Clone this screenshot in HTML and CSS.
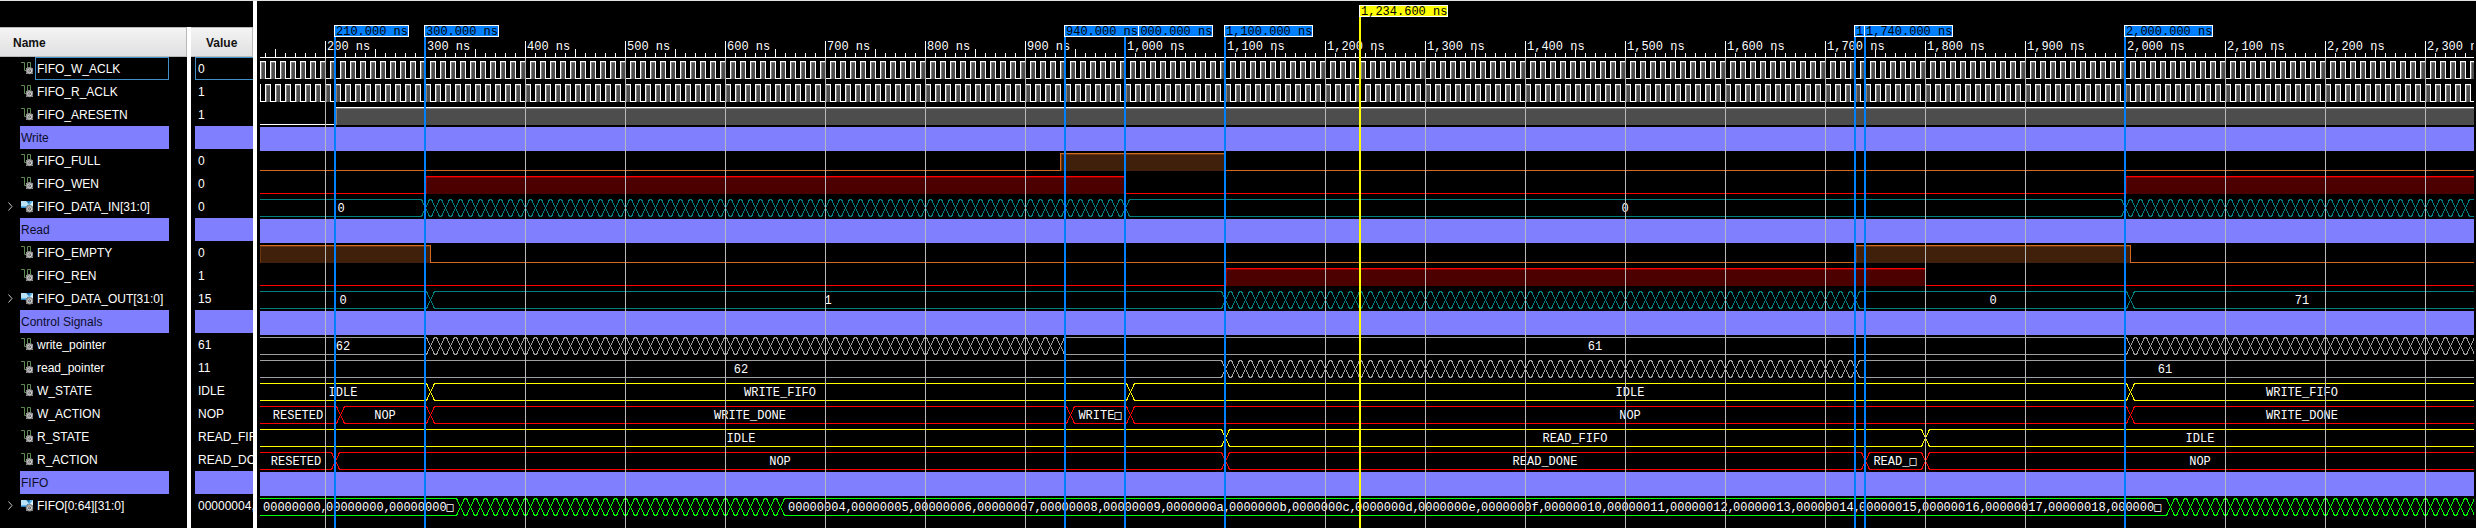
FILE: index.html
```html
<!DOCTYPE html>
<html lang="en">
<head>
<meta charset="utf-8">
<title>Waveform viewer</title>
<link rel="stylesheet" href="styles.css">
</head>
<body>
<svg class="symbols" aria-hidden="true">
  <symbol id="icon-scalar" viewBox="0 0 13 13">
    <path d="M0 0.5H3.5V8.5H6.5V0.5H9.5V5" fill="none" stroke="#5c8a50"/>
    <circle cx="8.5" cy="8.7" r="3.6" fill="#8c8c8c"/>
    <path d="M5.2 6.2l1.5 1.5M11.8 12l-1.2-1.2M5.2 12l1.5-1.5M12 6.4l-1.4 1.3" stroke="#b4b4b4"/>
    <circle cx="8.7" cy="8.9" r="1.9" fill="#4c4c4c" stroke="#dcdcdc"/>
    <circle cx="8.7" cy="8.9" r="0.7" fill="#e4e4e4"/>
  </symbol>
  <symbol id="icon-bus" viewBox="0 0 13 13">
    <path d="M0 1H12V6L9 8H0Z" fill="#5fb4e6"/>
    <path d="M0 1H6L8 4L6 6H0Z" fill="#b9e2f7"/>
    <path d="M5 1H9L8 4Z" fill="#1f6fae"/>
    <path d="M0 7.5H5L7 5" fill="none" stroke="#2f86c4"/>
    <path d="M9 5L12 1V7Z" fill="#dff2fb"/>
    <circle cx="8.5" cy="8.7" r="3.7" fill="#8c8c8c"/>
    <path d="M5.2 12l1.5-1.5M11.8 12l-1.2-1.2" stroke="#a4a4a4"/>
    <circle cx="8.7" cy="8.9" r="2" fill="#4c4c4c" stroke="#dcdcdc"/>
    <circle cx="8.7" cy="8.9" r="0.7" fill="#e4e4e4"/>
  </symbol>
</svg>
<main class="viewer">
  <section class="signals">
    <table class="signal-table">
      <colgroup><col class="col-name"><col class="col-value"></colgroup>
      <thead>
        <tr><th class="head-name" scope="col"><div class="head">Name</div></th><th class="head-value" scope="col"><div class="head">Value</div></th></tr>
      </thead>
      <tbody id="signal-rows"></tbody>
    </table>
  </section>
  <section class="waves">
    <svg id="wave" class="wave" role="img" aria-label="Signal waveforms"></svg>
  </section>
</main>
<script src="viewer.js"></script>
</body>
</html>
```
FILE: styles.css
```css
* {
  box-sizing: border-box;
}

body {
  margin: 0;
  min-height: 100vh;
  display: flex;
  flex-direction: column;
  overflow: hidden;
  background: #000;
  border-top: 1px solid #e2e2e2;
  color: #fff;
  font: 12px/23px "Liberation Sans", Arial, sans-serif;
}

.symbols {
  position: absolute;
  width: 0;
  height: 0;
}

.viewer {
  flex: 1;
  display: flex;
}

.signals {
  flex: none;
  width: 257px;
  padding-top: 26px;
  border-right: 4px solid #fff;
  background: linear-gradient(#fff, #fff) 187px 26px / 4px 100% no-repeat;
  overflow: hidden;
}

.signal-table {
  width: 100%;
  table-layout: fixed;
  border-collapse: collapse;
}

.col-name {
  width: 191px;
}

th,
td {
  padding: 0;
  text-align: left;
}

.head-name {
  padding-right: 4px;
}

.head {
  height: 30px;
  padding-left: 13px;
  border: solid #b8b8b8;
  border-width: 1px 1px 1px 0;
  background: linear-gradient(#f4f4f4, #e0e0e2);
  color: #111;
  line-height: 31px;
}

.head-value .head {
  padding-left: 15px;
}

.name {
  display: flex;
  align-items: center;
  height: 23px;
  padding: 0 22px 0 8px;
}

.toggle {
  flex: none;
  display: flex;
  align-items: center;
  width: 13px;
  height: 23px;
  padding: 0;
  border: 0;
  background: none;
}

.toggle path {
  fill: none;
  stroke: #c8c8c8;
}

.spacer {
  flex: none;
  width: 13px;
}

.icon {
  flex: none;
  width: 13px;
  height: 13px;
  margin-right: 1px;
}

.label {
  flex: 1;
  height: 23px;
  padding-left: 1px;
  border: 1px solid transparent;
  line-height: 23px;
  white-space: nowrap;
}

.value {
  height: 23px;
  margin-left: 4px;
  padding-left: 2px;
  border: 1px solid transparent;
  border-right: 0;
  line-height: 23px;
  white-space: nowrap;
  overflow: hidden;
}

.selected .label,
.selected .value {
  border-color: #3f8fc8;
}

.group .name {
  padding-left: 20px;
}

.group .label,
.group .value {
  padding-left: 0;
  background: #8080ff;
  border-color: #8080ff;
  color: #0c0c28;
}

.waves {
  flex: 1;
  min-width: 0;
  display: flex;
  padding: 0 2px 0 3px;
}

.wave {
  flex: 1;
  min-width: 0;
  width: 100%;
  overflow: hidden;
  shape-rendering: crispEdges;
  font: 12px "Liberation Mono", "Courier New", monospace;
}

.wave path {
  fill: none;
}

.wave text {
  fill: #fff;
  white-space: pre;
}

.wave .centered {
  text-anchor: middle;
}

.wave .cut {
  font-family: "DejaVu Sans Mono", monospace;
}

.wave .band {
  fill: #8080ff;
}

.wave .grid {
  fill: #b8b8b8;
}

.wave .tick {
  fill: #fff;
}

.wave .marker {
  fill: #0080ff;
}

.wave .cursor {
  fill: #ff0;
}

.wave .flag {
  stroke: #fff;
}

.wave .flag-text {
  fill: #000;
}

.clock { stroke: #fff; }
.orange { stroke: #d2691e; }
.red { stroke: #f00; }
.teal { stroke: #008080; }
.gray { stroke: #a0a0a0; }
.yellow { stroke: #ff0; }
.green { stroke: #0f0; }

.wave .clock-fill { fill: #4d4d4d; }
.wave .clock-edge { fill: #808080; }
.wave .orange-fill { fill: #40200a; }
.wave .orange-edge { fill: #6b3610; }
.wave .red-fill { fill: #4d0000; }
.wave .red-edge { fill: #900000; }
```
FILE: viewer.js
```js
const START = 135;
const LABEL_START = 131;
const ROW = 23;

const every10 = (from, to) => {
  const out = [];
  for (let t = from; t <= to; t += 10) out.push(t);
  return out;
};

const hexWords = (from, to) => {
  const out = [];
  for (let n = from; n <= to; n++) out.push(n.toString(16).padStart(8, "0") + ",");
  return out;
};

const signals = [
  { name: "FIFO_W_ACLK", value: "0", selected: true, color: "clock", firstRise: 135 },
  { name: "FIFO_R_ACLK", value: "1", color: "clock", firstRise: 130 },
  { name: "FIFO_ARESETN", value: "1", color: "clock", high: [[210, Infinity]] },
  { group: "Write" },
  { name: "FIFO_FULL", value: "0", color: "orange", high: [[935, 1100]] },
  { name: "FIFO_WEN", value: "0", color: "red", high: [[300, 1000], [2000, Infinity]] },
  { name: "FIFO_DATA_IN[31:0]", value: "0", bus: true, color: "teal",
    changes: [...every10(300, 1000), ...every10(2000, 2340)],
    labels: [[LABEL_START, 300, "0"], [1000, 2000, "0"]] },
  { group: "Read" },
  { name: "FIFO_EMPTY", value: "0", color: "orange", high: [[-Infinity, 305], [1730, 2005]] },
  { name: "FIFO_REN", value: "1", color: "red", high: [[1100, 1800]] },
  { name: "FIFO_DATA_OUT[31:0]", value: "15", bus: true, color: "teal",
    changes: [305, ...every10(1100, 1730), 2005],
    labels: [[LABEL_START, 305, "0"], [305, 1100, "1"], [1730, 2005, "0"], [2005, Infinity, "71"]] },
  { group: "Control Signals" },
  { name: "write_pointer", value: "61", color: "gray",
    changes: [...every10(305, 935), ...every10(2005, 2345)],
    labels: [[LABEL_START, 305, "62"], [935, 2005, "61"]] },
  { name: "read_pointer", value: "11", color: "gray",
    changes: every10(1100, 1730),
    labels: [[LABEL_START, 1100, "62"], [1730, Infinity, "61"]] },
  { name: "W_STATE", value: "IDLE", color: "yellow",
    changes: [305, 1005, 2005],
    labels: [[LABEL_START, 305, "IDLE"], [305, 1005, "WRITE_FIFO"], [1005, 2005, "IDLE"], [2005, Infinity, "WRITE_FIFO"]] },
  { name: "W_ACTION", value: "NOP", color: "red",
    changes: [215, 305, 945, 1005, 2005],
    labels: [[LABEL_START, 215, "RESETED"], [215, 305, "NOP"], [305, 945, "WRITE_DONE"], [945, 1005, "WRITE□"], [1005, 2005, "NOP"], [2005, Infinity, "WRITE_DONE"]] },
  { name: "R_STATE", value: "READ_FIFO", color: "yellow",
    changes: [1100, 1800],
    labels: [[LABEL_START, 1100, "IDLE"], [1100, 1800, "READ_FIFO"], [1800, Infinity, "IDLE"]] },
  { name: "R_ACTION", value: "READ_DONE", color: "red",
    changes: [210, 1100, 1740, 1800],
    labels: [[LABEL_START, 210, "RESETED"], [210, 1100, "NOP"], [1100, 1740, "READ_DONE"], [1740, 1800, "READ_□"], [1800, Infinity, "NOP"]] },
  { group: "FIFO" },
  { name: "FIFO[0:64][31:0]", value: "00000004,00000005", bus: true, color: "green",
    changes: [...every10(335, 655), ...every10(2045, 2345)],
    words: [[138, ["00000000,", "00000000,", "00000000□"]], [663, [...hexWords(4, 24), "000000□"]]] },
];

const markers = [
  [210, "210.000 ns"], [300, "300.000 ns"], [1000, "1,000.000 ns"], [940, "940.000 ns"],
  [1100, "1,100.000 ns"], [1730, "1,730.000 ns"], [1740, "1,740.000 ns"], [2000, "2,000.000 ns"],
];

function buildTable() {
  document.getElementById("signal-rows").innerHTML = signals.map((s) => {
    if (s.group) {
      return `<tr class="group"><td><div class="name"><span class="label">${s.group}</span></div></td><td><div class="value"></div></td></tr>`;
    }
    const lead = s.bus
      ? `<button class="toggle" type="button" aria-label="Expand ${s.name}"><svg width="5" height="9" viewBox="0 0 5 9"><path d="M.5 .5L4 4.5L.5 8.5"/></svg></button>`
      : `<span class="spacer"></span>`;
    const icon = s.bus ? "icon-bus" : "icon-scalar";
    return `<tr class="${s.selected ? "selected" : "signal"}"><td><div class="name">${lead}<svg class="icon" aria-hidden="true"><use href="#${icon}"/></svg><span class="label">${s.name}</span></div></td><td><div class="value">${s.value}</div></td></tr>`;
  }).join("");
}

const rect = (cls, x, y, w, h) => `<rect class="${cls}" x="${x}" y="${y}" width="${w}" height="${h}"/>`;
const text = (cls, x, y, str) =>
  `<text class="${cls}" x="${x}" y="${y}">${str.replace("□", '<tspan class="cut">□</tspan>')}</text>`;

function drawLevels(color, high, top, end) {
  const bottom = top + 17;
  let fills = "";
  let d = "";
  let pen = START;
  for (const [from, to] of high) {
    const a = Math.max(from, START - 1);
    const b = Math.min(to, end);
    const w = Math.max(b - a - 1, 0);
    fills += rect(`${color}-fill`, a + 1, top + 1, w, 17);
    fills += rect(`${color}-edge`, a + 1, top + 1, w, 1);
    fills += rect(`${color}-edge`, a + 1, top + 1, Math.min(w, 1), 17);
    if (from >= START) d += `M${pen} ${bottom + 0.5}H${a + 0.5}V${top + 0.5}`;
    else d += `M${START} ${top + 0.5}`;
    d += `H${b + 0.5}`;
    if (to < end) d += `V${bottom + 0.5}`;
    pen = b;
  }
  if (pen < end) d += `M${pen} ${bottom + 0.5}H${end}`;
  return `${fills}<path class="${color}" d="${d}"/>`;
}

function drawBus(color, changes, top, end) {
  const hi = top + 0.5;
  const lo = top + 17.5;
  let up = `M${START} ${hi}`;
  let down = `M${START} ${lo}`;
  let flipped = false;
  for (const t of changes) {
    const x = t + 0.5;
    const [a, b] = flipped ? [lo, hi] : [hi, lo];
    up += `L${x - 4} ${a}L${x + 4} ${b}`;
    down += `L${x - 4} ${b}L${x + 4} ${a}`;
    flipped = !flipped;
  }
  up += `L${end} ${flipped ? lo : hi}`;
  down += `L${end} ${flipped ? hi : lo}`;
  return `<path class="${color}" d="${up}${down}"/>`;
}

function drawWave() {
  const svg = document.getElementById("wave");
  const box = svg.getBoundingClientRect();
  const end = START + Math.round(box.width);
  const floor = Math.round(box.height) + 1;
  let out = "";

  signals.forEach((s, i) => {
    const top = 61 + i * ROW;
    if (s.group) {
      out += rect("band", START, top - 3, end - START, 24);
    } else if (s.firstRise) {
      out += drawLevels(s.color, every10(s.firstRise, end - 1).map((t) => [t, t + 5]), top, end);
    } else if (s.high) {
      out += drawLevels(s.color, s.high, top, end);
    } else {
      out += drawBus(s.color, s.changes, top, end);
    }
    for (const [from, to, str] of s.labels || []) {
      out += text("centered", Math.round((from + Math.min(to, end)) / 2), top + 13, str);
    }
    for (const [from, words] of s.words || []) {
      words.forEach((w, k) => { out += text("word", from + k * 63, top + 13, w); });
    }
  });

  out += rect("tick", START, 57, end - START, 1);
  for (let t = START + 5; t < end; t += 10) {
    if (t % 100 === 0) {
      out += rect("grid", t, 58, 1, floor - 58) + rect("tick", t, 41, 1, 17);
      out += text("scale", t + 2, 50, `${t.toLocaleString("en-US")} ns`);
    } else {
      const h = t % 50 === 0 ? 8 : 4;
      out += rect("tick", t, 57 - h, 1, h);
    }
  }

  const flag = (cls, t, y, str) =>
    rect(cls, t - 1, y + 12, 2, floor - y - 12) +
    rect(`${cls} flag`, t - 0.5, y + 0.5, str.length * 7 + 4, 11) +
    text("flag-text", t + 1, y + 10, str);
  for (const [t, str] of markers) out += flag("marker", t, 25, str);
  out += flag("cursor", 1235, 5, "1,234.600 ns");

  svg.innerHTML = `<g transform="translate(${-START} -1)">${out}</g>`;
}

buildTable();
drawWave();
window.addEventListener("resize", drawWave);
```
